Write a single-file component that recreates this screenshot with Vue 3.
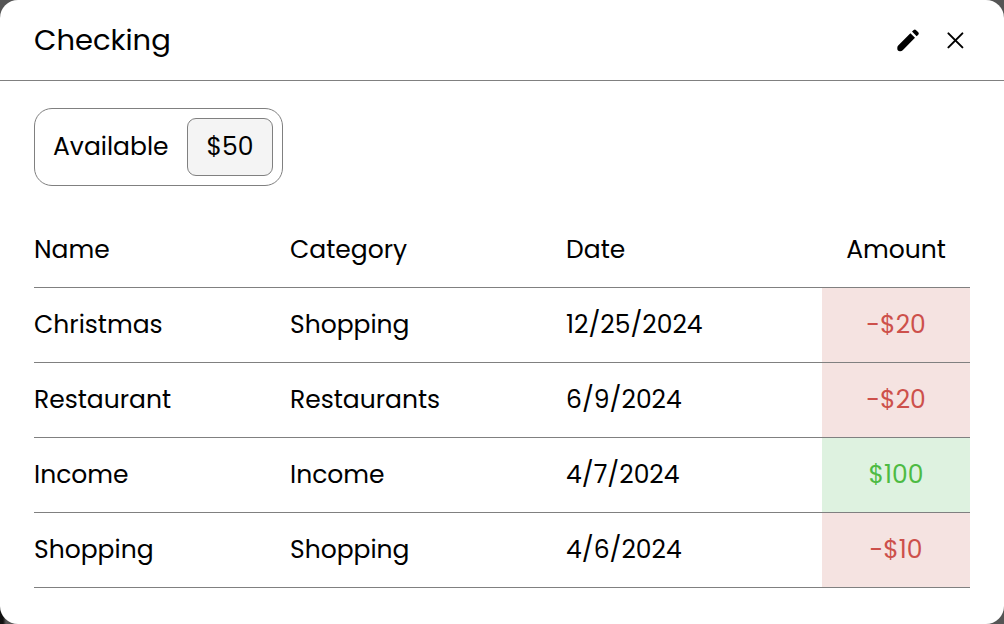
<script setup>
const account = { name: 'Checking', available: '$50' }

const transactions = [
  { name: 'Christmas', category: 'Shopping', date: '12/25/2024', amount: -20 },
  { name: 'Restaurant', category: 'Restaurants', date: '6/9/2024', amount: -20 },
  { name: 'Income', category: 'Income', date: '4/7/2024', amount: 100 },
  { name: 'Shopping', category: 'Shopping', date: '4/6/2024', amount: -10 },
]

const formatAmount = (value) => (value < 0 ? `-$${-value}` : `$${value}`)
</script>

<template>
  <div class="backdrop">
    <section class="dialog" role="dialog" aria-labelledby="account-title">
      <header class="header">
        <h1 id="account-title" class="title">{{ account.name }}</h1>
        <div class="actions">
          <button type="button" class="icon-button" aria-label="Edit account">
            <svg viewBox="0 0 24 24" width="24" height="24" aria-hidden="true">
              <path d="M14.4 5.2 19 9.8 6.7 22.2Q5.6 23.4 4 23.3Q1.3 23.2 1.3 20.6V19.8Q1.3 18.5 2.2 17.5Z" />
              <path d="M16 3.6 17.7 2.1Q18.9 1 20.1 2.2L22.3 4.3Q23.4 5.5 22.3 6.7L20.6 8.2Z" />
            </svg>
          </button>
          <button type="button" class="icon-button" aria-label="Close">
            <svg viewBox="0 0 24 24" width="24" height="24" aria-hidden="true">
              <path class="stroke" d="M5.4 5.4 19.4 19.4M19.4 5.4 5.4 19.4" />
            </svg>
          </button>
        </div>
      </header>

      <div class="content">
        <div class="balance">
          <span>Available</span>
          <span class="balance-value">{{ account.available }}</span>
        </div>

        <table class="transactions">
          <colgroup>
            <col class="col-name" />
            <col class="col-category" />
            <col class="col-date" />
            <col class="col-amount" />
          </colgroup>
          <thead>
            <tr>
              <th scope="col">Name</th>
              <th scope="col">Category</th>
              <th scope="col">Date</th>
              <th scope="col" class="amount">Amount</th>
            </tr>
          </thead>
          <tbody>
            <tr v-for="item in transactions" :key="item.name">
              <td>{{ item.name }}</td>
              <td>{{ item.category }}</td>
              <td>{{ item.date }}</td>
              <td class="amount" :class="item.amount < 0 ? 'expense' : 'income'">
                {{ formatAmount(item.amount) }}
              </td>
            </tr>
          </tbody>
        </table>
      </div>
    </section>
  </div>
</template>

<style>
body {
  margin: 0;
  background: #555;
}
</style>

<style scoped>
.backdrop {
  min-height: 100vh;
  display: flex;
  background:
    linear-gradient(to right, #111 3px, #555 6px) left bottom / 24px 24px no-repeat,
    #555;
  font-family: Poppins, Inter, "Open Sans", sans-serif;
  font-size: 25px;
  line-height: 38px;
  color: #000;
}

.dialog {
  flex: 1;
  min-width: 0;
  border-radius: 18px;
  background: #fff;
}

.header {
  display: flex;
  align-items: center;
  justify-content: space-between;
  padding: 16px 31px 16px 34px;
  border-bottom: 1px solid #808080;
}

.title {
  margin: 0;
  font-size: 29px;
  line-height: 48px;
  font-weight: 400;
}

.actions {
  display: flex;
  gap: 11px;
}

.icon-button {
  display: flex;
  align-items: center;
  justify-content: center;
  width: 36px;
  height: 36px;
  padding: 0;
  border: 0;
  background: none;
  color: inherit;
  cursor: pointer;
}

.stroke {
  fill: none;
  stroke: currentColor;
  stroke-width: 2;
  stroke-linecap: round;
}

.content {
  padding: 27px 34px 36px;
}

.balance {
  display: inline-flex;
  align-items: center;
  gap: 18px;
  padding: 9px 9px 9px 18px;
  border: 1px solid #808080;
  border-radius: 18px;
}

.balance-value {
  padding: 9px 19px;
  border: 1px solid #808080;
  border-radius: 9px;
  background: #f4f4f4;
}

.transactions {
  width: 100%;
  margin-top: 27px;
  table-layout: fixed;
  border-collapse: separate;
  border-spacing: 0;
}

.col-name,
.col-date {
  width: 27.35%;
}

.col-category {
  width: 29.5%;
}

.transactions th,
.transactions td {
  padding: 18px 0;
  border-bottom: 1px solid #808080;
  font-weight: 400;
  text-align: left;
}

.transactions .amount {
  text-align: center;
}

.expense {
  background: #f5e3e1;
  color: #cd504b;
}

.income {
  background: #def2e0;
  color: #4dbb43;
}
</style>
